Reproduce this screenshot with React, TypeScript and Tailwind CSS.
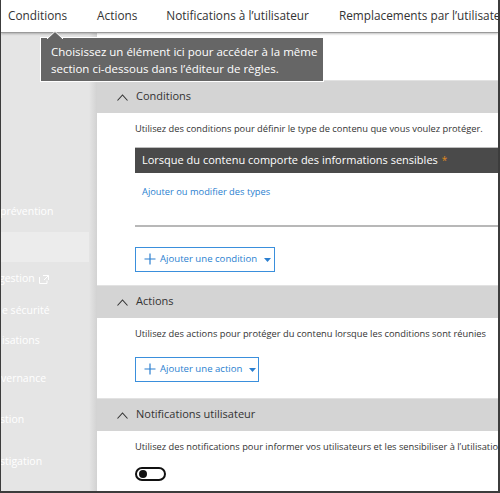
import React from "react";

const font = { fontFamily: '"Open Sans", "Noto Sans", sans-serif' };

function Chevron() {
  return (
    <svg width="11" height="7" viewBox="0 0 11 7" className="shrink-0">
      <path d="M0.5 6.5 L5.5 1 L10.5 6.5" fill="none" stroke="#333" strokeWidth="1.1" />
    </svg>
  );
}

function SectionHeader({ title }: { title: string }) {
  return (
    <div className="h-[33px] shrink-0 bg-[#d4d4d4] border-t border-[#e2e2e2] flex items-center pl-[20px] gap-[8px] text-[11px] text-[#333] whitespace-nowrap">
      <Chevron />
      <span className="-mt-[1px]">{title}</span>
    </div>
  );
}

function AddButton({ label, w }: { label: string; w: string }) {
  return (
    <div className={`${w} h-[25px] border border-[#3a8fdc] flex items-center pl-[8px] gap-[4px] text-[9.6px] text-[#2b7fd0] whitespace-nowrap`}>
      <svg width="12" height="12" viewBox="0 0 12 12" className="shrink-0">
        <path d="M6 0.5 V11.5 M0.5 6 H11.5" stroke="#2b7fd0" strokeWidth="1.2" />
      </svg>
      <span>{label}</span>
      <svg width="7" height="4" viewBox="0 0 7 4" className="ml-[3px] mt-[2px] shrink-0">
        <path d="M0 0 H7 L3.5 4 Z" fill="#2b7fd0" />
      </svg>
    </div>
  );
}

export default function App() {
  return (
    <div
      className="relative w-[500px] h-[493px] overflow-hidden bg-white border-l border-r-2 border-b-2 border-[#3c3c3c] flex flex-col"
      style={font}
    >
      {/* header */}
      <div className="h-[33px] shrink-0 bg-white border-b border-[#9a9a9a] shadow-[0_1px_2px_rgba(0,0,0,0.25)] flex items-center text-[11.8px] text-[#333] whitespace-nowrap relative z-10">
        <span className="ml-[7px]">Conditions</span>
        <span className="ml-[30px]">Actions</span>
        <span className="ml-[29px]">Notifications à l’utilisateur</span>
        <span className="ml-[30px]">Remplacements par l’utilisateur</span>
      </div>

      <div className="flex flex-1 min-h-0">
        {/* sidebar */}
        <div className="w-[96px] shrink-0 bg-[#e5e5e5] relative text-white text-[10.5px] whitespace-nowrap overflow-hidden">
          <div className="absolute right-0 top-0 bottom-0 w-[8px] bg-gradient-to-r from-[#e5e5e5] to-[#d2d2d2]" />
          <div className="flex flex-col">
            <div className="h-[28px] mt-[165px] flex items-center -ml-[1px]">prévention</div>
            <div className="h-[6px]" />
            <div className="h-[30px] bg-[#ececec] mr-[8px]" />
            <div className="h-[34px] flex items-center -ml-[2px] gap-[4px]">
              gestion
              <svg width="10" height="9" viewBox="0 0 10 9">
                <path d="M0.5 2 V8.5 H8 V5.5 M4 0.5 H9.5 V5 M9.5 0.5 L5 5" fill="none" stroke="white" strokeWidth="1" />
              </svg>
            </div>
            <div className="h-[30px] flex items-center ml-[1px]">e sécurité</div>
            <div className="h-[30px] flex items-center ml-[1px]">isations</div>
            <div className="h-[46px] flex items-center ml-0">vernance</div>
            <div className="h-[36px] flex items-center -ml-[1px]">stion</div>
            <div className="h-[48px] flex items-center -ml-[1px]">stigation</div>
          </div>
        </div>

        {/* main */}
        <div className="flex-1 flex flex-col min-w-0 text-[#333]">
          <div className="h-[47px] shrink-0" />
          <SectionHeader title="Conditions" />
          <div className="h-[172px] shrink-0 pl-[38px] flex flex-col">
            <div className="text-[9.3px] mt-[9px] whitespace-nowrap">
              Utilisez des conditions pour définir le type de contenu que vous voulez protéger.
            </div>
            <div className="mt-[11px] h-[26px] bg-[#4a4a4a] border-t border-[#bdbdbd] flex items-center pl-[7px] text-[11px] text-white whitespace-nowrap">
              Lorsque du contenu comporte des informations sensibles
              <span className="text-[#e08a1e] ml-[4px] text-[10px]">*</span>
            </div>
            <div className="mt-[12px] pl-[7px] text-[9.3px] text-[#2b7fd0] whitespace-nowrap">Ajouter ou modifier des types</div>
            <div className="mt-[26px] h-[2px] bg-[#b8b8b8]" />
            <div className="mt-[20px]">
              <AddButton label="Ajouter une condition" w="w-[140px]" />
            </div>
          </div>
          <SectionHeader title="Actions" />
          <div className="h-[80px] shrink-0 pl-[38px] flex flex-col">
            <div className="text-[9.3px] mt-[9px] whitespace-nowrap">
              Utilisez des actions pour protéger du contenu lorsque les conditions sont réunies
            </div>
            <div className="mt-[16px]">
              <AddButton label="Ajouter une action" w="w-[124px]" />
            </div>
          </div>
          <SectionHeader title="Notifications utilisateur" />
          <div className="flex-1 pl-[38px] flex flex-col">
            <div className="text-[9.3px] mt-[9px] whitespace-nowrap">
              Utilisez des notifications pour informer vos utilisateurs et les sensibiliser à l’utilisation
            </div>
            <div className="mt-[13px] w-[31px] h-[14px] rounded-full border-2 border-[#111] flex items-center pl-[2px]">
              <div className="w-[8px] h-[8px] rounded-full bg-[#111]" />
            </div>
          </div>
        </div>
      </div>

      {/* tooltip */}
      <div className="absolute left-[39px] top-[37px] w-[284px] h-[45px] bg-[#666666] border border-white text-white text-[11.5px] leading-[17px] px-[10px] pt-[5px] z-20 whitespace-nowrap">
        Choisissez un élément ici pour accéder à la même
        <br />
        section ci-dessous dans l’éditeur de règles.
        <svg className="absolute left-[6px] -top-[7px]" width="16" height="8" viewBox="0 0 16 8">
          <path d="M0 8 L8 0.5 L16 8" fill="#666666" stroke="white" strokeWidth="1" />
        </svg>
      </div>
    </div>
  );
}
